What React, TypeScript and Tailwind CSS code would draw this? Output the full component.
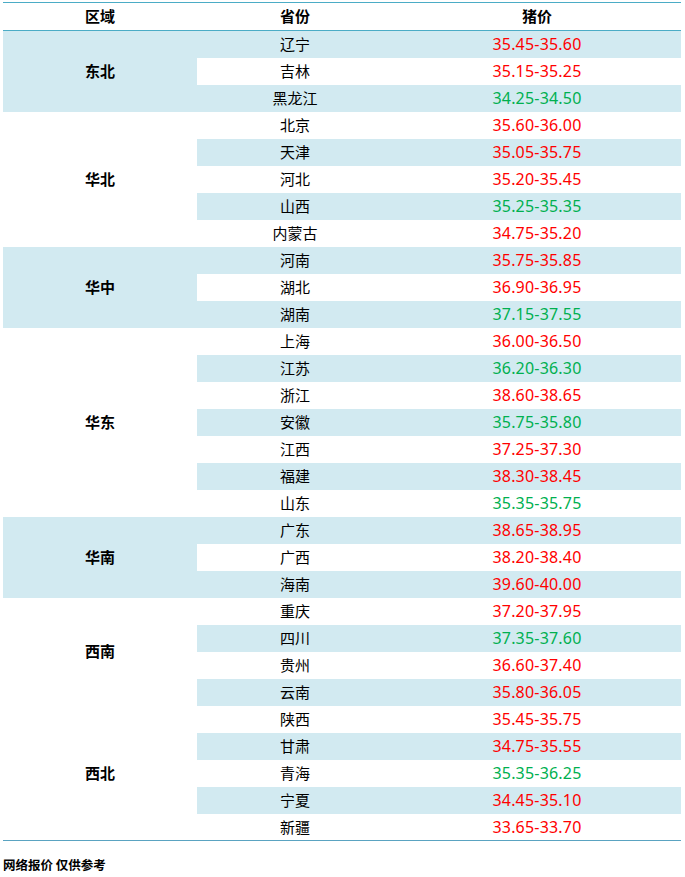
const R = "text-[#ff0000]";
const G = "text-[#00b050]";

type Row = { p: string; v: string; up: boolean };
type Group = { name: string; blue: boolean; rows: Row[] };

const groups: Group[] = [
  {
    name: "东北",
    blue: true,
    rows: [
      { p: "辽宁", v: "35.45-35.60", up: true },
      { p: "吉林", v: "35.15-35.25", up: true },
      { p: "黑龙江", v: "34.25-34.50", up: false },
    ],
  },
  {
    name: "华北",
    blue: false,
    rows: [
      { p: "北京", v: "35.60-36.00", up: true },
      { p: "天津", v: "35.05-35.75", up: true },
      { p: "河北", v: "35.20-35.45", up: true },
      { p: "山西", v: "35.25-35.35", up: false },
      { p: "内蒙古", v: "34.75-35.20", up: true },
    ],
  },
  {
    name: "华中",
    blue: true,
    rows: [
      { p: "河南", v: "35.75-35.85", up: true },
      { p: "湖北", v: "36.90-36.95", up: true },
      { p: "湖南", v: "37.15-37.55", up: false },
    ],
  },
  {
    name: "华东",
    blue: false,
    rows: [
      { p: "上海", v: "36.00-36.50", up: true },
      { p: "江苏", v: "36.20-36.30", up: false },
      { p: "浙江", v: "38.60-38.65", up: true },
      { p: "安徽", v: "35.75-35.80", up: false },
      { p: "江西", v: "37.25-37.30", up: true },
      { p: "福建", v: "38.30-38.45", up: true },
      { p: "山东", v: "35.35-35.75", up: false },
    ],
  },
  {
    name: "华南",
    blue: true,
    rows: [
      { p: "广东", v: "38.65-38.95", up: true },
      { p: "广西", v: "38.20-38.40", up: true },
      { p: "海南", v: "39.60-40.00", up: true },
    ],
  },
  {
    name: "西南",
    blue: false,
    rows: [
      { p: "重庆", v: "37.20-37.95", up: true },
      { p: "四川", v: "37.35-37.60", up: false },
      { p: "贵州", v: "36.60-37.40", up: true },
      { p: "云南", v: "35.80-36.05", up: true },
    ],
  },
  {
    name: "西北",
    blue: false,
    rows: [
      { p: "陕西", v: "35.45-35.75", up: true },
      { p: "甘肃", v: "34.75-35.55", up: true },
      { p: "青海", v: "35.35-36.25", up: false },
      { p: "宁夏", v: "34.45-35.10", up: true },
      { p: "新疆", v: "33.65-33.70", up: true },
    ],
  },
];

const cjk = "font-['Noto_Sans_CJK_SC',sans-serif]";
const num = "font-['Noto_Sans','Noto_Sans_CJK_SC',sans-serif]";

export default function App() {
  let idx = 0;
  return (
    <div className="w-[685px] h-[877px] bg-white pt-[2px]">
      <table className="ml-[3px] w-[678px] border-collapse table-fixed">
        <colgroup>
          <col className="w-[194px]" />
          <col className="w-[196px]" />
          <col />
        </colgroup>
        <thead>
          <tr className={`h-[28px] border-t border-b border-[#4bacc6] text-[15px] font-bold text-black ${cjk}`}>
            <th className="p-0 font-bold">区域</th>
            <th className="p-0 font-bold">省份</th>
            <th className="p-0 font-bold">猪价</th>
          </tr>
        </thead>
        <tbody className="border-b border-[#5aa3c1]">
          {groups.map((g) =>
            g.rows.map((r, i) => {
              const blue = idx % 2 === 0;
              idx++;
              return (
                <tr key={r.p} className="h-[27px]">
                  {i === 0 && (
                    <td
                      rowSpan={g.rows.length}
                      className={`p-0 text-center text-[15px] font-bold text-black ${cjk} ${g.blue ? "bg-[#d2eaf1]" : "bg-white"}`}
                    >
                      {g.name}
                    </td>
                  )}
                  <td className={`p-0 text-center text-[15px] text-black ${cjk} ${blue ? "bg-[#d2eaf1]" : "bg-white"}`}>
                    {r.p}
                  </td>
                  <td className={`p-0 text-center text-[16px] tracking-[0.2px] ${num} ${r.up ? R : G} ${blue ? "bg-[#d2eaf1]" : "bg-white"}`}>
                    {r.v}
                  </td>
                </tr>
              );
            })
          )}
        </tbody>
      </table>
      <div className={`mt-[15px] ml-[3px] text-[12.5px] font-bold text-black ${cjk}`}>网络报价 仅供参考</div>
    </div>
  );
}
